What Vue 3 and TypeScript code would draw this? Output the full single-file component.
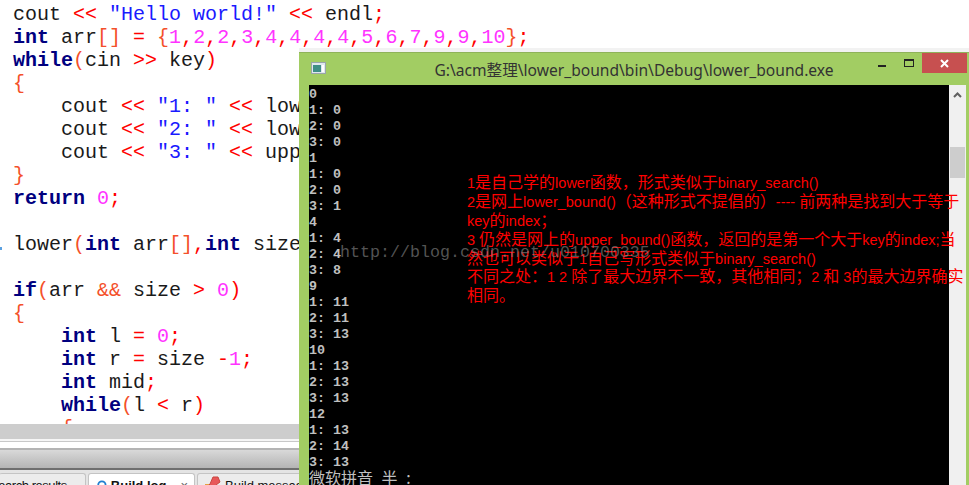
<script setup lang="ts">
type Tok = [string, string?];
const code: Tok[][] = [
  [['cout '], ['<< ', 'o'], ['"Hello world!"', 's'], [' '], ['<< ', 'o'], ['endl'], [';', 'o']],
  [['int', 'k'], [' arr'], ['[]', 'b'], [' '], ['=', 'o'], [' '], ['{', 'b'], ['1', 'n'], [',', 'o'], ['2', 'n'], [',', 'o'], ['2', 'n'], [',', 'o'], ['3', 'n'], [',', 'o'], ['4', 'n'], [',', 'o'], ['4', 'n'], [',', 'o'], ['4', 'n'], [',', 'o'], ['4', 'n'], [',', 'o'], ['5', 'n'], [',', 'o'], ['6', 'n'], [',', 'o'], ['7', 'n'], [',', 'o'], ['9', 'n'], [',', 'o'], ['9', 'n'], [',', 'o'], ['10', 'n'], ['}', 'b'], [';', 'o']],
  [['while', 'k'], ['(', 'b'], ['cin '], ['>>', 'o'], [' key'], [')', 'o']],
  [['{', 'b']],
  [['    cout '], ['<<', 'o'], [' '], ['"1: "', 's'], [' '], ['<<', 'o'], [' low']],
  [['    cout '], ['<<', 'o'], [' '], ['"2: "', 's'], [' '], ['<<', 'o'], [' low']],
  [['    cout '], ['<<', 'o'], [' '], ['"3: "', 's'], [' '], ['<<', 'o'], [' upp']],
  [['}', 'b']],
  [['return', 'k'], [' '], ['0', 'n'], [';', 'o']],
  [],
  [['lower'], ['(', 'b'], ['int', 'k'], [' arr'], ['[]', 'b'], [',', 'o'], ['int', 'k'], [' size']],
  [],
  [['if', 'k'], ['(', 'b'], ['arr '], ['&&', 'b'], [' size '], ['>', 'o'], [' '], ['0', 'n'], [')', 'o']],
  [['{', 'b']],
  [['    '], ['int', 'k'], [' l '], ['=', 'o'], [' '], ['0', 'n'], [';', 'o']],
  [['    '], ['int', 'k'], [' r '], ['=', 'o'], [' size '], ['-', 'o'], ['1', 'n'], [';', 'o']],
  [['    '], ['int', 'k'], [' mid'], [';', 'o']],
  [['    '], ['while', 'k'], ['(', 'b'], ['l '], ['<', 'o'], [' r'], [')', 'o']],
  [['    '], ['{', 'b']],
];
const rows = ['0','1: 0','2: 0','3: 0','1','1: 0','2: 0','3: 1','4','1: 4','2: 4','3: 8','9','1: 11','2: 11','3: 13','10','1: 13','2: 13','3: 13','12','1: 13','2: 14','3: 13'];
const notes = [
  '1是自己学的lower函数，形式类似于binary_search()',
  '2是网上lower_bound()（这种形式不提倡的）---- 前两种是找到大于等于',
  'key的index；',
  '3 仍然是网上的upper_bound()函数，返回的是第一个大于key的index;当',
  '然也可以类似于1自己写形式类似于binary_search()',
  '不同之处：1 2 除了最大边界不一致，其他相同；2 和 3的最大边界确实',
  '相同。',
].map((n) => n.split(/([\x00-\x7f]+)/).filter(Boolean).map((text) => ({ text, latin: /^[\x00-\x7f]/.test(text) })));
</script>

<template>
  <div class="page">
    <div class="editor">
      <div class="code">
        <div v-for="(line, i) in code" :key="i" class="line"><span v-for="(t, j) in line" :key="j" :class="t[1]">{{ t[0] }}</span></div>
        <span class="sliver"></span>
      </div>
      <div class="hscroll"></div>
      <div class="split"></div>
      <div class="toolbar"></div>
      <div class="tabs">
        <div class="tab side first"><span>Search results</span></div>
        <div class="tab active">
          <svg width="16" height="16" viewBox="0 0 16 16"><circle cx="8" cy="8" r="6" fill="#fff" stroke="#1f7fd0" stroke-width="3"/></svg>
          <b>Build log</b><i>×</i>
        </div>
        <div class="tab side">
          <svg width="17" height="15" viewBox="0 0 17 15"><path d="M1 13 L6 8 L9 1 L14 1 L16 6 L12 9 L8 15 L2 15Z" fill="#e8585a" stroke="#c9463f"/><rect x="1" y="8" width="4" height="6" fill="#e6a040"/></svg>
          <span>Build messages</span>
        </div>
      </div>
    </div>

    <div class="window">
      <div class="title">
        <svg class="appicon" width="15" height="12" viewBox="0 0 15 12">
          <rect x="0.5" y="0.5" width="14" height="11" fill="#dfe8ee" stroke="#9aa5ab"/>
          <rect x="2" y="3" width="8" height="7" fill="#3f8f86"/>
          <rect x="11" y="3" width="2" height="7" fill="#fff"/>
        </svg>
        <span class="caption">G:\acm整理\lower_bound\bin\Debug\lower_bound.exe</span>
        <div class="controls">
          <svg class="min" width="8" height="2" viewBox="0 0 8 2"><rect width="8" height="2" fill="#222"/></svg>
          <svg class="max" width="10" height="8" viewBox="0 0 10 8"><rect x="0.5" y="0.5" width="9" height="7" fill="none" stroke="#222"/><rect width="10" height="2" fill="#222"/></svg>
          <div class="close">
            <svg width="9" height="9" viewBox="0 0 9 9"><path d="M1 1 L8 8 M8 1 L1 8" stroke="#fff" stroke-width="2"/></svg>
          </div>
        </div>
      </div>
      <div class="body">
        <div class="term">
          <div v-for="(r, i) in rows" :key="i" class="row">{{ r }}</div>
          <div class="ime">微软拼音 半 :</div>
        </div>
        <div class="scroll">
          <svg width="9" height="6" viewBox="0 0 9 6"><path d="M1 5 L4.5 1.5 L8 5" fill="none" stroke="#606060" stroke-width="2"/></svg>
          <div class="thumb"></div>
        </div>
      </div>
    </div>

    <div class="notes">
      <div v-for="(n, i) in notes" :key="i" class="note"><span v-for="(s, j) in n" :key="j" :class="{ latin: s.latin }">{{ s.text }}</span></div>
    </div>
    <div class="mark">http://blog.csdn.net/u010700335</div>
  </div>
</template>

<style>
html, body { margin: 0; background: #fff; }
</style>

<style scoped>
.page { position: relative; width: 969px; height: 485px; overflow: hidden; background: #fff; }
.editor { display: flex; flex-direction: column; width: 969px; height: 485px; }
.code { position: relative; height: 424px; overflow: hidden; padding: 3px 0 0 13px; box-sizing: border-box; font: 20px/23px "Liberation Mono", monospace; color: #1a1a1a; flex: none; }
.line { height: 23px; white-space: pre; }
.sliver { position: absolute; left: 0; top: 247px; width: 2px; height: 3px; background: #5aa0e0; }
.k { color: #00007f; font-weight: 700; }
.o { color: #ff0000; }
.b { color: #f4502a; }
.s { color: #1a1aff; }
.n { color: #ff33ff; }
.hscroll { height: 15px; background: #cdcdcd; flex: none; }
.split { height: 11px; box-sizing: border-box; border-bottom: 2px solid #b4b4b4; background: linear-gradient(#f6f6f6 0 2px, #c8c8c8 2px 3px, #fff 3px); flex: none; }
.toolbar { height: 18px; background: linear-gradient(#d9d9d9, #b4b4b4); border-bottom: 2px solid #6e6e6e; flex: none; }
.tabs { display: flex; gap: 2px; flex: 1; background: #e4e4e4; padding-top: 3px; font: 13px "Liberation Sans", sans-serif; color: #111; overflow: hidden; }
.tab { display: flex; align-items: flex-start; gap: 4px; height: 22px; box-sizing: border-box; padding: 4px 6px 0; border: 1px solid #c4c4c4; border-bottom: 0; border-radius: 3px 3px 0 0; background: #ececec; white-space: nowrap; }
.first { width: 87px; margin-left: -1px; padding: 4px 0 0; border-left: 0; overflow: hidden; }
.first span { margin-left: -9px; letter-spacing: -0.45px; }
.active { width: 107px; background: #fff; padding-left: 8px; }
.active svg { margin-top: -1px; }
.side svg { margin-top: -2px; }
.tab i { font-style: normal; color: #666; margin-left: 10px; }
.window { position: absolute; left: 299px; top: 52px; width: 680px; height: 440px; display: flex; flex-direction: column; background: #a2cd63; box-shadow: 0 -4px 0 #f2f2f2; border-top: 1px solid #8fb35a; box-sizing: border-box; }
.title { position: relative; height: 32px; display: flex; align-items: center; justify-content: center; padding-right: 10px; flex: none; }
.appicon { position: absolute; left: 12px; top: 9px; }
.caption { font: 15.6px "Noto Sans", "Noto Sans CJK SC", sans-serif; color: #333; margin-top: 1px; }
.controls { position: absolute; left: 0; top: 0; width: 668px; height: 20px; display: flex; justify-content: flex-end; align-items: flex-start; }
.min { margin: 12px 18px 0 0; }
.max { margin: 6px 8px 0 0; }
.close { width: 45px; height: 20px; background: #c75050; display: flex; align-items: center; justify-content: center; }
.body { display: flex; flex: 1; padding-left: 10px; }
.term { width: 640px; background: #000; color: #c0c0c0; font: 700 13.33px/16px "Liberation Mono", monospace; flex: none; padding-top: 2px; box-sizing: border-box; }
.row { height: 16px; white-space: pre; }
.ime { font: 16px/16px "Noto Sans CJK SC", sans-serif; white-space: pre; margin-top: -2px; word-spacing: 5px; }
.scroll { width: 17px; height: 100%; background: #f0f0f0; display: flex; flex-direction: column; align-items: center; padding-top: 7px; box-sizing: border-box; }
.thumb { width: 15px; height: 31px; background: #cdcdcd; margin-top: 49px; }
.notes { position: absolute; left: 467px; top: 172px; font: 16px/18.9px "Noto Sans CJK SC", sans-serif; color: #ff0000; white-space: pre; }
.note { height: 18.9px; overflow: visible; }
.latin { font: 14.5px/18.9px "Liberation Sans", sans-serif; }
.mark { position: absolute; left: 340px; top: 243px; font: 16.67px/20px "Liberation Mono", monospace; color: rgba(140, 140, 140, 0.6); white-space: pre; }
</style>
